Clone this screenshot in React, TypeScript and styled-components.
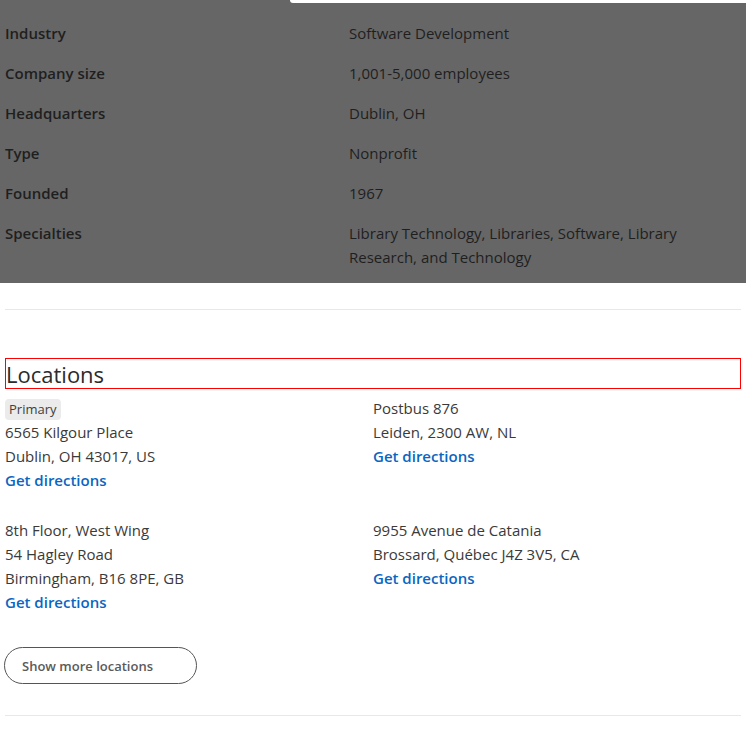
import React from "react";
import styled, { createGlobalStyle } from "styled-components";

const GlobalStyle = createGlobalStyle`
  html, body {
    margin: 0;
    padding: 0;
    background: #ffffff;
  }
  body {
    font-family: "Open Sans", "Noto Sans", "Liberation Sans", sans-serif;
    color: #333333;
  }
  * { box-sizing: border-box; }
`;

const Page = styled.div`
  position: relative;
  width: 746px;
  overflow: hidden;
`;

const ModalEdge = styled.div`
  position: absolute;
  top: 0;
  left: 290px;
  right: 0;
  height: 3px;
  background: #ffffff;
  border-bottom-left-radius: 8px;
`;

const DimmedPanel = styled.section`
  background: #666666;
  padding: 21px 5px 14px;
`;

const DetailsList = styled.dl`
  display: grid;
  grid-template-columns: 344px 1fr;
  row-gap: 16px;
  margin: 0;
  font-size: 15px;
  line-height: 24px;
  color: #1f1f1f;
`;

const Term = styled.dt`
  font-weight: 600;
`;

const Value = styled.dd`
  margin: 0;
  font-weight: 400;
  padding-right: 50px;
`;

const Content = styled.div`
  padding: 0 5px;
`;

const Divider = styled.hr<{ $top: number }>`
  margin: ${(p) => p.$top}px 0 0;
  border: 0;
  height: 1px;
  background: #e8e8e8;
`;

const Heading = styled.h2`
  margin: 48px 0 0;
  border: 1px solid #ff0000;
  padding-top: 2px;
  font-size: 22px;
  line-height: 27px;
  font-weight: 400;
  color: #2b2b2b;
`;

const LocationGrid = styled.div`
  display: grid;
  grid-template-columns: 368px 368px;
  row-gap: 26px;
  margin-top: 7px;
`;

const Location = styled.div`
  display: flex;
  flex-direction: column;
  font-size: 15px;
  line-height: 24px;
  color: #3a3a3a;
`;

const BadgeLine = styled.div`
  height: 24px;
  display: flex;
  align-items: center;
`;

const Badge = styled.span`
  display: inline-block;
  margin-top: 2px;
  height: 21px;
  line-height: 21px;
  padding: 0 4px;
  border-radius: 4px;
  background: #ebebeb;
  font-size: 13px;
  color: #404040;
`;

const AddressLine = styled.span``;

const DirectionsLink = styled.a`
  color: #0a66c2;
  font-weight: 600;
  text-decoration: none;
  cursor: pointer;
`;

const MoreButton = styled.button`
  margin-top: 33px;
  margin-left: -1px;
  width: 193px;
  height: 37px;
  border: 1px solid #555555;
  border-radius: 19px;
  background: #ffffff;
  font-family: inherit;
  font-size: 13px;
  font-weight: 600;
  color: #5a5a5a;
  text-align: left;
  padding: 0 0 0 17px;
  cursor: pointer;
`;

const details: [string, string][] = [
  ["Industry", "Software Development"],
  ["Company size", "1,001-5,000 employees"],
  ["Headquarters", "Dublin, OH"],
  ["Type", "Nonprofit"],
  ["Founded", "1967"],
  ["Specialties", "Library Technology, Libraries, Software, Library Research, and Technology"],
];

const locations: { primary?: boolean; lines: string[] }[] = [
  { primary: true, lines: ["6565 Kilgour Place", "Dublin, OH 43017, US"] },
  { lines: ["Postbus 876", "Leiden, 2300 AW, NL"] },
  { lines: ["8th Floor, West Wing", "54 Hagley Road", "Birmingham, B16 8PE, GB"] },
  { lines: ["9955 Avenue de Catania", "Brossard, Québec J4Z 3V5, CA"] },
];

export default function App() {
  return (
    <Page>
      <GlobalStyle />
      <DimmedPanel>
        <DetailsList>
          {details.map(([k, v]) => (
            <React.Fragment key={k}>
              <Term>{k}</Term>
              <Value>{v}</Value>
            </React.Fragment>
          ))}
        </DetailsList>
      </DimmedPanel>
      <ModalEdge />
      <Content>
        <Divider $top={26} />
        <Heading>Locations</Heading>
        <LocationGrid>
          {locations.map((loc, i) => (
            <Location key={i}>
              {loc.primary && (
                <BadgeLine>
                  <Badge>Primary</Badge>
                </BadgeLine>
              )}
              {loc.lines.map((l) => (
                <AddressLine key={l}>{l}</AddressLine>
              ))}
              <DirectionsLink>Get directions</DirectionsLink>
            </Location>
          ))}
        </LocationGrid>
        <MoreButton>Show more locations</MoreButton>
        <Divider $top={31} />
      </Content>
    </Page>
  );
}
